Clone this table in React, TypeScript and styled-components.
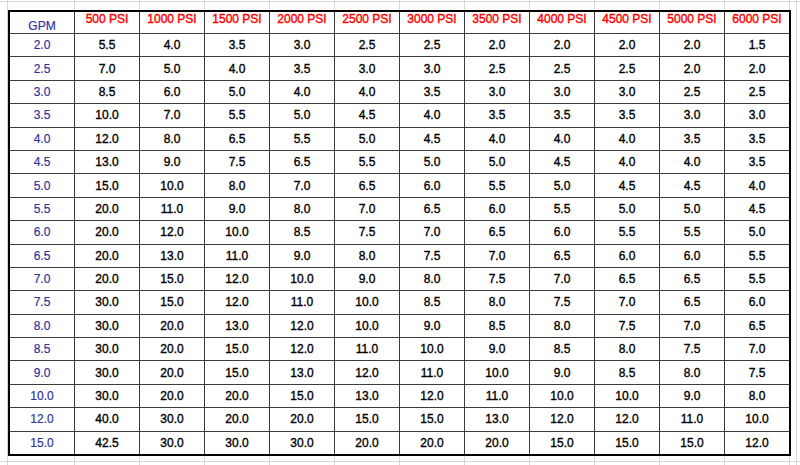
import React from "react";
import styled, { createGlobalStyle } from "styled-components";

const GlobalStyle = createGlobalStyle`
  html, body { margin: 0; padding: 0; background: #ffffff; }
  body { font-family: "Liberation Sans", Arial, sans-serif; }
`;

const GRID = "#d8d8d8";

const Sheet = styled.div`
  width: 800px;
  height: 465px;
  box-sizing: border-box;
  padding: 10px 0 0 8px;
  background-color: #ffffff;
  background-image:
    linear-gradient(${GRID}, ${GRID}),
    linear-gradient(${GRID}, ${GRID}),
    linear-gradient(${GRID}, ${GRID}),
    linear-gradient(${GRID}, ${GRID}),
    repeating-linear-gradient(
      to right,
      transparent 0,
      transparent 64px,
      ${GRID} 64px,
      ${GRID} 65px
    );
  background-size: 1px 100%, 1px 100%, 100% 1px, 100% 1px, 100% 100%;
  background-position: 7px 0, 796px 0, 0 1px, 0 461px, 10px 0;
  background-repeat: no-repeat, no-repeat, no-repeat, no-repeat, repeat;
  overflow: hidden;
`;

const Table = styled.div`
  display: grid;
  grid-template-columns: repeat(12, 64px);
  grid-template-rows: 21px repeat(18, 1fr);
  gap: 1px;
  width: 783px;
  height: 446px;
  box-sizing: border-box;
  border: 2px solid #000000;
  background: #3c3c3c;
`;

const HeaderCell = styled.div<{ $gpm?: boolean }>`
  background: #ffffff;
  display: flex;
  justify-content: center;
  align-items: ${(p) => (p.$gpm ? "flex-end" : "flex-start")};
  padding: ${(p) => (p.$gpm ? "0" : "1px 0 0")};
  font-size: 12px;
  line-height: 13px;
  color: ${(p) => (p.$gpm ? "#333399" : "#ff0000")};
  -webkit-text-stroke: ${(p) => (p.$gpm ? "0.2px" : "0.4px")} currentColor;
  white-space: nowrap;
`;

const Cell = styled.div<{ $gpm?: boolean }>`
  background: #ffffff;
  display: flex;
  justify-content: center;
  align-items: center;
  font-size: 12px;
  line-height: 14px;
  color: ${(p) => (p.$gpm ? "#333399" : "#000000")};
  -webkit-text-stroke: ${(p) => (p.$gpm ? "0.2px" : "0.35px")} currentColor;
`;

const pressures = [500, 1000, 1500, 2000, 2500, 3000, 3500, 4000, 4500, 5000, 6000];

const rows: [string, string[]][] = [
  ["2.0", ["5.5", "4.0", "3.5", "3.0", "2.5", "2.5", "2.0", "2.0", "2.0", "2.0", "1.5"]],
  ["2.5", ["7.0", "5.0", "4.0", "3.5", "3.0", "3.0", "2.5", "2.5", "2.5", "2.0", "2.0"]],
  ["3.0", ["8.5", "6.0", "5.0", "4.0", "4.0", "3.5", "3.0", "3.0", "3.0", "2.5", "2.5"]],
  ["3.5", ["10.0", "7.0", "5.5", "5.0", "4.5", "4.0", "3.5", "3.5", "3.5", "3.0", "3.0"]],
  ["4.0", ["12.0", "8.0", "6.5", "5.5", "5.0", "4.5", "4.0", "4.0", "4.0", "3.5", "3.5"]],
  ["4.5", ["13.0", "9.0", "7.5", "6.5", "5.5", "5.0", "5.0", "4.5", "4.0", "4.0", "3.5"]],
  ["5.0", ["15.0", "10.0", "8.0", "7.0", "6.5", "6.0", "5.5", "5.0", "4.5", "4.5", "4.0"]],
  ["5.5", ["20.0", "11.0", "9.0", "8.0", "7.0", "6.5", "6.0", "5.5", "5.0", "5.0", "4.5"]],
  ["6.0", ["20.0", "12.0", "10.0", "8.5", "7.5", "7.0", "6.5", "6.0", "5.5", "5.5", "5.0"]],
  ["6.5", ["20.0", "13.0", "11.0", "9.0", "8.0", "7.5", "7.0", "6.5", "6.0", "6.0", "5.5"]],
  ["7.0", ["20.0", "15.0", "12.0", "10.0", "9.0", "8.0", "7.5", "7.0", "6.5", "6.5", "5.5"]],
  ["7.5", ["30.0", "15.0", "12.0", "11.0", "10.0", "8.5", "8.0", "7.5", "7.0", "6.5", "6.0"]],
  ["8.0", ["30.0", "20.0", "13.0", "12.0", "10.0", "9.0", "8.5", "8.0", "7.5", "7.0", "6.5"]],
  ["8.5", ["30.0", "20.0", "15.0", "12.0", "11.0", "10.0", "9.0", "8.5", "8.0", "7.5", "7.0"]],
  ["9.0", ["30.0", "20.0", "15.0", "13.0", "12.0", "11.0", "10.0", "9.0", "8.5", "8.0", "7.5"]],
  ["10.0", ["30.0", "20.0", "20.0", "15.0", "13.0", "12.0", "11.0", "10.0", "10.0", "9.0", "8.0"]],
  ["12.0", ["40.0", "30.0", "20.0", "20.0", "15.0", "15.0", "13.0", "12.0", "12.0", "11.0", "10.0"]],
  ["15.0", ["42.5", "30.0", "30.0", "30.0", "20.0", "20.0", "20.0", "15.0", "15.0", "15.0", "12.0"]],
];

export default function App() {
  return (
    <>
      <GlobalStyle />
      <Sheet>
        <Table>
          <HeaderCell $gpm>GPM</HeaderCell>
          {pressures.map((p) => (
            <HeaderCell key={p}>{p} PSI</HeaderCell>
          ))}
          {rows.map(([gpm, values]) => (
            <React.Fragment key={gpm}>
              <Cell $gpm>{gpm}</Cell>
              {values.map((v, i) => (
                <Cell key={i}>{v}</Cell>
              ))}
            </React.Fragment>
          ))}
        </Table>
      </Sheet>
    </>
  );
}
